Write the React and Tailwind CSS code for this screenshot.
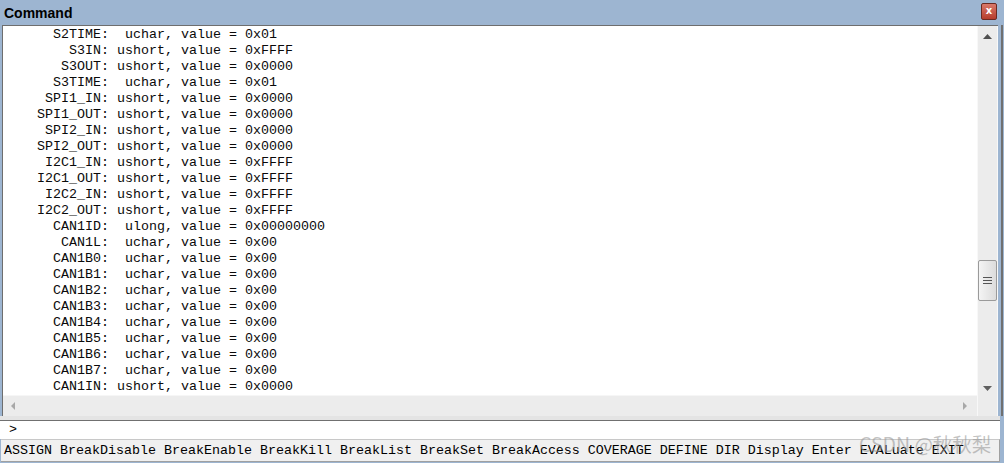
import React from "react";

const rows = [
  ["S2TIME", "uchar", "0x01"],
  ["S3IN", "ushort", "0xFFFF"],
  ["S3OUT", "ushort", "0x0000"],
  ["S3TIME", "uchar", "0x01"],
  ["SPI1_IN", "ushort", "0x0000"],
  ["SPI1_OUT", "ushort", "0x0000"],
  ["SPI2_IN", "ushort", "0x0000"],
  ["SPI2_OUT", "ushort", "0x0000"],
  ["I2C1_IN", "ushort", "0xFFFF"],
  ["I2C1_OUT", "ushort", "0xFFFF"],
  ["I2C2_IN", "ushort", "0xFFFF"],
  ["I2C2_OUT", "ushort", "0xFFFF"],
  ["CAN1ID", "ulong", "0x00000000"],
  ["CAN1L", "uchar", "0x00"],
  ["CAN1B0", "uchar", "0x00"],
  ["CAN1B1", "uchar", "0x00"],
  ["CAN1B2", "uchar", "0x00"],
  ["CAN1B3", "uchar", "0x00"],
  ["CAN1B4", "uchar", "0x00"],
  ["CAN1B5", "uchar", "0x00"],
  ["CAN1B6", "uchar", "0x00"],
  ["CAN1B7", "uchar", "0x00"],
  ["CAN1IN", "ushort", "0x0000"],
];

const lines = rows.map(
  ([n, t, v]) => (n + ":").padStart(13) + t.padStart(7) + ", value = " + v
);

const mono = { fontFamily: '"Liberation Mono", "Courier New", monospace' };

export default function App() {
  return (
    <div className="relative w-[1004px] h-[463px] bg-[#9db5d1] flex flex-col overflow-hidden">
      {/* Title bar */}
      <div className="h-[25px] shrink-0 flex items-center justify-between pl-[4px] pr-[7px]">
        <span
          className="text-[14px] font-bold text-black leading-none"
          style={{ fontFamily: '"Liberation Sans", Arial, sans-serif' }}
        >
          Command
        </span>
        <div className="w-[16px] h-[17px] mt-[-3px] rounded-[2px] border border-[#6b2a22] bg-gradient-to-b from-[#d9786a] to-[#b53c2c] flex items-center justify-center">
          <span
            className="text-white text-[10px] font-bold leading-none"
            style={{ fontFamily: '"DejaVu Sans", sans-serif' }}
          >
            x
          </span>
        </div>
      </div>

      {/* Main output panel */}
      <div className="flex h-[391px] shrink-0">
        <div className="w-[2px] shrink-0" />
        <div className="flex flex-1 border-t border-l border-[#6e6e6e]">
          <div className="flex flex-col flex-1">
            <div className="flex-1 bg-white overflow-hidden pl-[2px] pt-[1px]">
              <pre
                className="text-[13.33px] leading-[16px] text-[#0a0a0a] m-0"
                style={mono}
              >
                {lines.join("\n")}
              </pre>
            </div>
            {/* horizontal scrollbar */}
            <div className="h-[21px] shrink-0 bg-[#ececec] border-t border-[#f6f6f6] flex items-center justify-between pl-[7px] pr-[9px]">
              <svg width="6" height="8" viewBox="0 0 6 8">
                <path d="M5 0 L1 4 L5 8 Z" fill="#a8a8a8" />
              </svg>
              <svg width="6" height="8" viewBox="0 0 6 8">
                <path d="M1 0 L5 4 L1 8 Z" fill="#a8a8a8" />
              </svg>
            </div>
          </div>
          {/* vertical scrollbar */}
          <div className="w-[21px] shrink-0 bg-[#ececec] border-l border-[#f8f8f8] border-r border-r-[#f8f8f8] flex flex-col items-center">
            <div className="h-[20px] flex items-center justify-center pt-[1px]">
              <svg width="9" height="5" viewBox="0 0 9 5">
                <path d="M0 5 L4.5 0 L9 5 Z" fill="#505050" />
              </svg>
            </div>
            <div className="h-[214px]" />
            <div className="w-[19px] h-[41px] rounded-[2px] border border-[#9a9a9a] bg-gradient-to-r from-[#f4f4f4] to-[#dcdcdc] flex flex-col items-center justify-center gap-[2px]">
              <div className="w-[9px] h-[1px] bg-[#555]" />
              <div className="w-[9px] h-[1px] bg-[#555]" />
              <div className="w-[9px] h-[1px] bg-[#555]" />
            </div>
            <div className="flex-1" />
            <div className="h-[20px] flex items-start justify-center pt-[2px] mb-[12px]">
              <svg width="9" height="5" viewBox="0 0 9 5">
                <path d="M0 0 L4.5 5 L9 0 Z" fill="#606060" />
              </svg>
            </div>
          </div>
        </div>
        <div className="w-[3px] shrink-0 bg-[#9db5d1]" />
        <div className="w-[2px] shrink-0 bg-[#707070]" />
        <div className="w-[1px] shrink-0" />
      </div>

      {/* separator */}
      <div className="h-[4px] shrink-0 bg-[#e4e4e4] mr-[4px]" />
      <div className="h-[1px] shrink-0 bg-[#707070] mr-[4px]" />

      {/* input line */}
      <div className="h-[18px] shrink-0 bg-white mr-[4px] pl-[9px] flex items-center">
        <span className="text-[13.33px] leading-[16px] text-black" style={mono}>
          &gt;
        </span>
      </div>

      {/* bottom command list */}
      <div className="flex-1 bg-[#f0f0f0] border-t border-[#c8c8c8] border-r border-r-[#a0a0a0] border-b border-b-[#a0a0a0] mr-[4px] ml-[1px] mb-[1px] pl-[3px] pt-[1px] flex items-center">
        <span
          className="text-[13.33px] leading-[16px] text-black whitespace-pre"
          style={mono}
        >
          ASSIGN BreakDisable BreakEnable BreakKill BreakList BreakSet
          BreakAccess COVERAGE DEFINE DIR Display Enter EVALuate EXIT
        </span>
      </div>

      {/* watermark */}
      <div
        className="absolute left-[859px] top-[431px] text-[19.5px] leading-[26px] text-[#9a9a9a]/60 whitespace-nowrap"
        style={{ fontFamily: '"Noto Sans CJK SC", "Noto Sans", sans-serif' }}
      >
        CSDN @秋秋梨
      </div>
    </div>
  );
}
